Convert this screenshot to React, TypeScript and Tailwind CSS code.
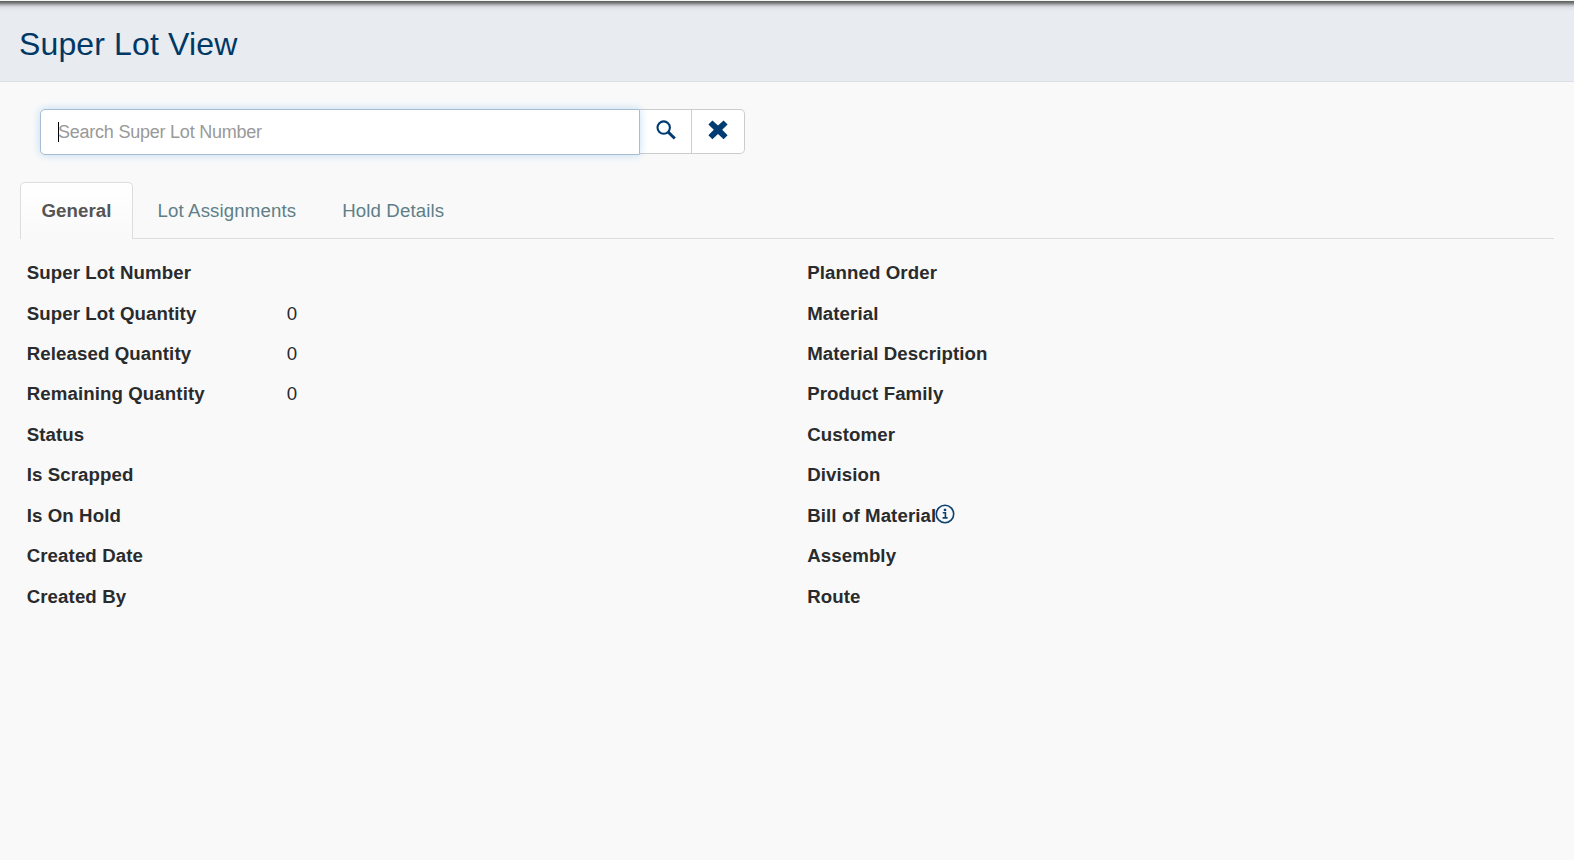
type Field = { label: string; value?: string; info?: boolean };

const lotFields: Field[] = [
  { label: 'Super Lot Number' },
  { label: 'Super Lot Quantity', value: '0' },
  { label: 'Released Quantity', value: '0' },
  { label: 'Remaining Quantity', value: '0' },
  { label: 'Status' },
  { label: 'Is Scrapped' },
  { label: 'Is On Hold' },
  { label: 'Created Date' },
  { label: 'Created By' },
];

const orderFields: Field[] = [
  { label: 'Planned Order' },
  { label: 'Material' },
  { label: 'Material Description' },
  { label: 'Product Family' },
  { label: 'Customer' },
  { label: 'Division' },
  { label: 'Bill of Material', info: true },
  { label: 'Assembly' },
  { label: 'Route' },
];

function SearchIcon() {
  return (
    <svg width="20" height="20" viewBox="0 0 20 20" fill="none" stroke="#003b71">
      <circle cx="7.7" cy="7.6" r="6.2" strokeWidth="2.1" />
      <path d="M12 11.9l6.8 6.6" strokeWidth="2.9" />
    </svg>
  );
}

function ClearIcon() {
  return (
    <svg width="20" height="20" viewBox="0 0 20 20" fill="#003b71">
      <path d="M4.4 .4 10 5.6 15.6 .4 19.6 4.4 14.2 9.8 19.6 15.2 15.6 19.2 10 14 4.4 19.2 .4 15.2 5.8 9.8 .4 4.4z" />
    </svg>
  );
}

function InfoIcon() {
  return (
    <svg className="-mt-[3px] -ml-px" width="20" height="20" viewBox="0 0 20 20" fill="none" stroke="#0b4070">
      <circle cx="10" cy="10" r="8.7" strokeWidth="1.6" />
      <path d="M7.8 8.8h2.6v5M7.6 13.9h5" strokeWidth="1.6" />
      <path d="M10 4.8v2.3" strokeWidth="2.4" />
    </svg>
  );
}

function FieldList({ fields }: { fields: Field[] }) {
  return (
    <dl className="flex w-[780.5px] shrink-0 flex-col">
      {fields.map((f) => (
        <div key={f.label} className="flex h-[40.45px] items-center">
          <dt className="flex w-[260px] items-center font-bold tracking-[0.1px] whitespace-nowrap">
            {f.label}
            {f.info && <InfoIcon />}
          </dt>
          <dd>{f.value}</dd>
        </div>
      ))}
    </dl>
  );
}

export default function App() {
  return (
    <div className="h-[860px] overflow-hidden bg-[#f9f9f9] font-['Liberation_Sans',Arial,sans-serif] text-[18.67px] text-[#292b2c]">
      <div className="h-px bg-[#f4f6f6]" />
      <header className="flex h-[81px] items-center border-b border-[#dae0e5] bg-[#e8ebf0] bg-[linear-gradient(to_bottom,#5c605e_0px,#666967_1px,#7c7f7e_2px,#979a9b_3px,#b3b6b8_4px,#c9ccd0_5px,#d8dbe0_6px,#e2e5ea_8px,#e8ebf0_11px)] pl-[19px]">
        <h1 className="pt-[5px] text-[32px] leading-9 tracking-[0.14px] text-[#003865]">Super Lot View</h1>
      </header>

      <div className="flex items-start pt-[27px] pl-10">
        <div className="relative flex h-[46px] w-[600px] items-center rounded-l-[5px] border border-[#a5bdd5] bg-white pl-[17px] text-[18px] tracking-[-0.23px] text-[#999] shadow-[0_0_8px_rgba(102,175,233,0.4)]">
          <span className="h-5 w-px bg-black" />
          <span className="-ml-px">Search Super Lot Number</span>
        </div>
        <button className="flex h-[45px] w-[52px] items-start justify-center border-y border-r border-[#ccc] bg-white pt-[10px]">
          <SearchIcon />
        </button>
        <button className="flex h-[45px] w-[53px] items-start justify-center rounded-r-[5px] border-y border-r border-[#ccc] bg-white pt-[10px]">
          <ClearIcon />
        </button>
      </div>

      <nav className="mt-[27px] flex h-[57px] px-5">
        <button className="w-[113px] rounded-t-[5px] border border-b-0 border-[#ddd] bg-linear-to-b from-white to-[#f9f9f9] pb-px font-bold tracking-[0.1px] text-[#555]">
          General
        </button>
        <div className="flex flex-1 items-center gap-[46px] border-b border-[#ddd] pt-px pl-[24.5px] tracking-[0.12px] text-[#5e7f88]">
          <button>Lot Assignments</button>
          <button>Hold Details</button>
        </div>
      </nav>

      <main className="flex pt-[13.9px] pl-[26.7px]">
        <FieldList fields={lotFields} />
        <FieldList fields={orderFields} />
      </main>
    </div>
  );
}
